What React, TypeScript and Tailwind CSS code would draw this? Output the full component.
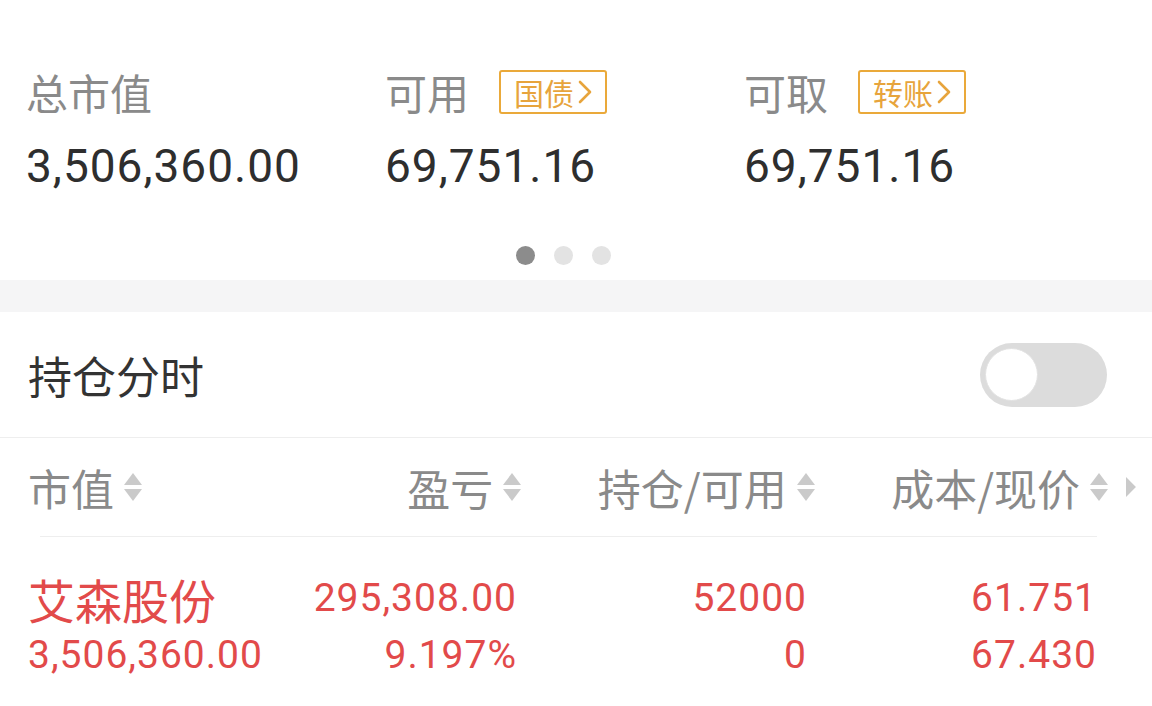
import React from 'react';

const cjk = { fontFamily: '"Noto Sans CJK SC", "Noto Sans", sans-serif' };
const num = { fontFamily: 'Roboto, "Noto Sans", sans-serif' };

function Badge({ text }: { text: string }) {
  return (
    <div className="flex items-center h-[44px] w-[108px] border-2 border-[#eaa93a] rounded-[3px] pl-[13px] text-[#e7a43c]">
      <span className="text-[30px] leading-none" style={cjk}>{text}</span>
      <svg width="18" height="26" viewBox="0 0 18 26" className="ml-[2px]">
        <path d="M4 3 L14 13 L4 23" fill="none" stroke="#e7a43c" strokeWidth="2.6" strokeLinecap="round" strokeLinejoin="round" />
      </svg>
    </div>
  );
}

function SortIcon() {
  return (
    <svg width="20" height="30" viewBox="0 0 20 30" className="ml-[9px]">
      <path d="M10 1 L19 13 L1 13 Z" fill="#cacaca" />
      <path d="M1 17 L19 17 L10 29 Z" fill="#cacaca" />
    </svg>
  );
}

function Stat({ label, value, badge }: { label: string; value: string; badge?: string }) {
  return (
    <div className="w-[359px] flex flex-col">
      <div className="flex items-center h-[44px] gap-[30px]">
        <span className="text-[42px] leading-none text-[#8a8a8a]" style={cjk}>{label}</span>
        {badge && <Badge text={badge} />}
      </div>
      <div className="mt-[29px] text-[46px] leading-none tracking-[1px] text-[#2e2e2e]" style={num}>
        {value}
      </div>
    </div>
  );
}

const cell = 'text-right text-[39px] leading-none tracking-[1px]';

export default function App() {
  return (
    <div className="w-[1152px] h-[706px] bg-white overflow-hidden">
      <div className="h-[280px] flex flex-col">
        <div className="flex pt-[70px] pl-[26px]">
          <Stat label="总市值" value="3,506,360.00" />
          <Stat label="可用" value="69,751.16" badge="国债" />
          <Stat label="可取" value="69,751.16" badge="转账" />
        </div>
        <div className="flex justify-center gap-[19px] mt-[57px] pr-[26px]">
          <div className="w-[19px] h-[19px] rounded-full bg-[#8c8c8c]" />
          <div className="w-[19px] h-[19px] rounded-full bg-[#e3e3e3]" />
          <div className="w-[19px] h-[19px] rounded-full bg-[#e3e3e3]" />
        </div>
      </div>
      <div className="h-[32px] bg-[#f5f5f6]" />
      <div className="h-[126px] flex items-center justify-between pl-[28px] pr-[45px] border-b border-[#eeeeee]">
        <span className="text-[44px] leading-none text-[#333333]" style={cjk}>持仓分时</span>
        <div className="w-[127px] h-[64px] rounded-full bg-[#dcdcdc] flex items-center pl-[5px]">
          <div className="w-[53px] h-[53px] rounded-full bg-white border border-[#e2e2e2]" />
        </div>
      </div>
      <div className="mx-[40px] mr-[55px] h-[99px] border-b border-[#eeeeee]">
        <div className="h-full flex items-center -ml-[12px] text-[43px] leading-none text-[#8a8a8a]" style={cjk}>
          <div className="w-[272px] flex items-center">
            <span>市值</span>
            <SortIcon />
          </div>
          <div className="w-[225px] flex items-center justify-end">
            <span>盈亏</span>
            <SortIcon />
          </div>
          <div className="w-[295px] flex items-center justify-end">
            <span>持仓/可用</span>
            <SortIcon />
          </div>
          <div className="w-[295px] flex items-center justify-end">
            <span>成本/现价</span>
            <SortIcon />
          </div>
          <svg width="12" height="22" viewBox="0 0 12 22" className="ml-[16px] -mr-[40px]">
            <path d="M1 1 L11 11 L1 21 Z" fill="#cacaca" />
          </svg>
        </div>
      </div>
      <div className="pl-[28px] pt-[38px] text-[#e24a4a]">
        <div className="grid grid-cols-[272px_217px_290px_290px] items-center h-[42px]">
          <span className="text-[47px] leading-none" style={cjk}>艾森股份</span>
          <span className={cell} style={num}>295,308.00</span>
          <span className={cell} style={num}>52000</span>
          <span className={cell} style={num}>61.751</span>
        </div>
        <div className="grid grid-cols-[272px_217px_290px_290px] items-center h-[42px] mt-[17px]">
          <span className="text-[39px] leading-none tracking-[1px]" style={num}>3,506,360.00</span>
          <span className={cell} style={num}>9.197%</span>
          <span className={cell} style={num}>0</span>
          <span className={cell} style={num}>67.430</span>
        </div>
      </div>
    </div>
  );
}
